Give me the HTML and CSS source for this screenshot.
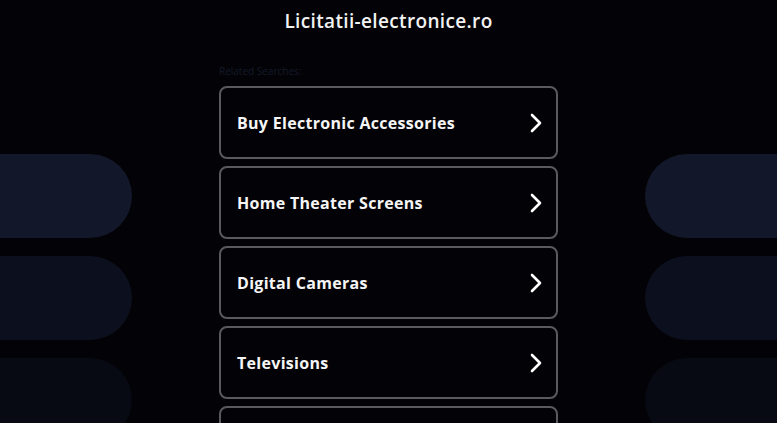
FILE: index.html
```html
<!DOCTYPE html>
<html lang="ro">
<head>
    <meta charset="UTF-8">
    <meta name="viewport" content="width=device-width, initial-scale=1.0">
    <title>Licitatii-electronice.ro</title>
    <link rel="stylesheet" href="styles.css">
</head>
<body>
    <header class="site-header">
        <h1>Licitatii-electronice.ro</h1>
    </header>

    <div class="layout">
        <div class="side side-left">
            <div class="pill pill-1"></div>
            <div class="pill pill-2"></div>
            <div class="pill pill-3"></div>
        </div>

        <main class="searches">
            <p class="searches-label">Related Searches:</p>
            <a class="search-link" href="#">
                <span>Buy Electronic Accessories</span>
                <svg class="chevron" viewBox="0 0 14 20" width="14" height="20"><path d="M3 2 L11 10 L3 18"/></svg>
            </a>
            <a class="search-link" href="#">
                <span>Home Theater Screens</span>
                <svg class="chevron" viewBox="0 0 14 20" width="14" height="20"><path d="M3 2 L11 10 L3 18"/></svg>
            </a>
            <a class="search-link" href="#">
                <span>Digital Cameras</span>
                <svg class="chevron" viewBox="0 0 14 20" width="14" height="20"><path d="M3 2 L11 10 L3 18"/></svg>
            </a>
            <a class="search-link" href="#">
                <span>Televisions</span>
                <svg class="chevron" viewBox="0 0 14 20" width="14" height="20"><path d="M3 2 L11 10 L3 18"/></svg>
            </a>
            <a class="search-link" href="#">
                <span>Smart Home Devices</span>
                <svg class="chevron" viewBox="0 0 14 20" width="14" height="20"><path d="M3 2 L11 10 L3 18"/></svg>
            </a>
        </main>

        <div class="side side-right">
            <div class="pill pill-1"></div>
            <div class="pill pill-2"></div>
            <div class="pill pill-3"></div>
        </div>
    </div>
</body>
</html>
```

FILE: styles.css
```css
body {
    margin: 0;
    background-color: #030307;
    font-family: 'Open Sans', 'Liberation Sans', sans-serif;
    color: #fff;
    overflow: hidden;
}
.site-header {
    height: 60px;
    padding-top: 9px;
    box-sizing: border-box;
    text-align: center;
}
.site-header h1 {
    margin: 0;
    font-size: 19px;
    line-height: 24px;
    font-weight: 600;
    letter-spacing: 0.35px;
    color: #f2f2f2;
}
.layout {
    display: grid;
    grid-template-columns: 132px 1fr 339px 1fr 132px;
}
.side-left {
    grid-column: 1;
}
.searches {
    grid-column: 3;
}
.side-right {
    grid-column: 5;
}
.side {
    padding-top: 94px;
}
.pill {
    height: 84px;
    margin-bottom: 18px;
}
.pill-3 {
    margin-top: 5px;
}
.side-left .pill {
    border-radius: 0 42px 42px 0;
}
.side-right .pill {
    border-radius: 42px 0 0 42px;
}
.pill-1 { background-color: #13172a; }
.pill-2 { background-color: #0c0f1e; }
.pill-3 { background-color: #070913; }

.searches-label {
    margin: 4px 0 8px;
    font-size: 10px;
    line-height: 14px;
    color: #151929;
}
.search-link {
    display: flex;
    align-items: center;
    justify-content: space-between;
    height: 73px;
    margin-bottom: 7px;
    padding: 0 13px 0 16px;
    box-sizing: border-box;
    border: 2px solid #5a5a5c;
    border-radius: 8px;
    color: #f5f5f5;
    text-decoration: none;
    font-size: 16px;
    line-height: 20px;
    font-weight: 700;
    letter-spacing: 0.3px;
}
.chevron {
    fill: none;
    stroke: #fff;
    stroke-width: 2.6;
    stroke-linecap: round;
    stroke-linejoin: round;
}
```
